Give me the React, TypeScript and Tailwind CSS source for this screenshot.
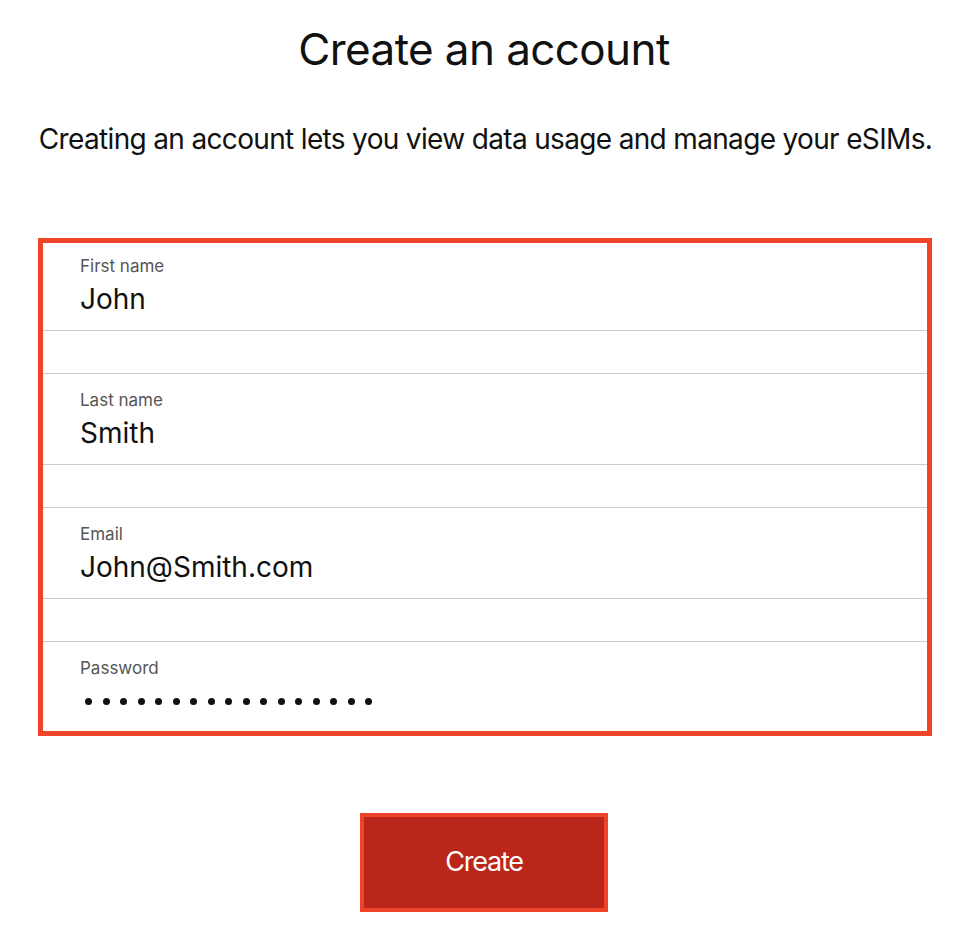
import React from "react";

const font = { fontFamily: "Inter, 'Liberation Sans', sans-serif" };

function Field({ label, value, first, last, password }: { label: string; value?: string; first?: boolean; last?: boolean; password?: boolean }) {
  return (
    <div
      className={`flex flex-col pl-[37px] ${first ? "pt-[13px]" : "border-t border-[#cccccc] pt-[16px]"} ${last ? "pb-[14px]" : "border-b border-[#cccccc] pb-[15px]"}`}
    >
      <div className="text-[17px] leading-[20px] text-[#555555]">{label}</div>
      {password ? (
        <div className="mt-[7px] flex h-[32px] items-center gap-[10.5px] pl-[5px]">
          {Array.from({ length: 17 }).map((_, i) => (
            <span key={i} className="h-[7px] w-[7px] rounded-full bg-[#111111]" />
          ))}
        </div>
      ) : (
        <div className="mt-[7px] text-[28px] leading-[32px] text-[#111111]">{value}</div>
      )}
    </div>
  );
}

export default function App() {
  return (
    <div className="flex min-h-[938px] w-[968px] flex-col items-center bg-white" style={font}>
      <h1 className="mt-[25px] text-[44px] leading-[48px] font-normal tracking-[-0.6px] text-[#111111]">Create an account</h1>
      <p className="mt-[50px] ml-[3px] text-[28px] leading-[32px] tracking-[-0.66px] text-[#111111]">
        Creating an account lets you view data usage and manage your eSIMs.
      </p>
      <div className="mt-[83px] ml-[38px] flex w-[894px] flex-col self-start border-[5px] border-[#ee4429]">
        <Field label="First name" value="John" first />
        <div className="h-[42px]" />
        <Field label="Last name" value="Smith" />
        <div className="h-[42px]" />
        <Field label="Email" value="John@Smith.com" />
        <div className="h-[42px]" />
        <Field label="Password" password last />
      </div>
      <button className="mt-[77px] flex h-[99px] w-[248px] items-center justify-center border-[4px] border-[#ee4429] bg-[#bb261b] text-[27px] tracking-[-1.2px] text-white">
        Create
      </button>
    </div>
  );
}
